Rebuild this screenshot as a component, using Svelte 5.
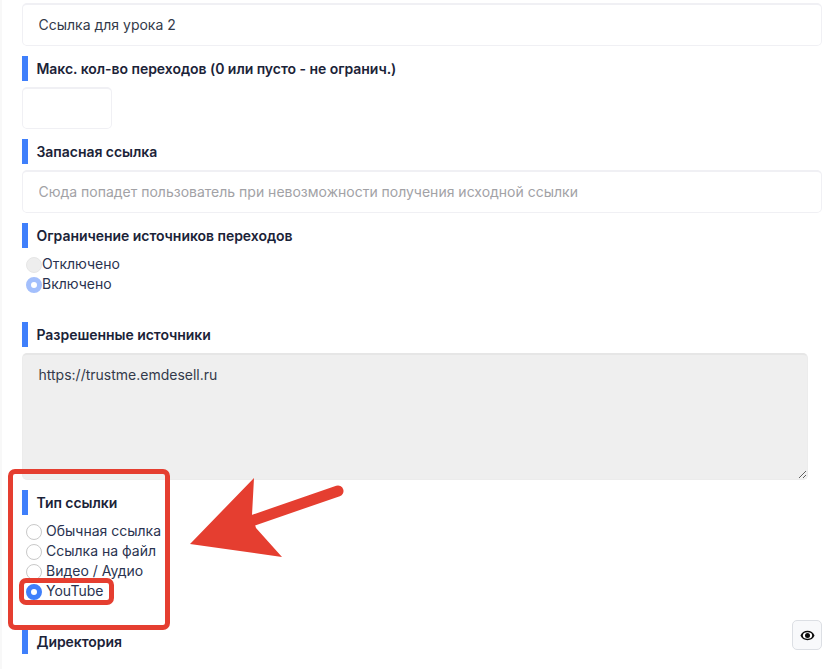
<script lang="ts">
  const linkTypes = ['Обычная ссылка', 'Ссылка на файл', 'Видео / Аудио', 'YouTube']
  let linkType = $state('YouTube')
</script>

<div class="page">
  <input class="field first" type="text" value="Ссылка для урока 2" />

  <div class="label">Макс. кол-во переходов (0 или пусто - не огранич.)</div>
  <input class="field short" type="text" />

  <div class="label">Запасная ссылка</div>
  <input
    class="field"
    type="text"
    placeholder="Сюда попадет пользователь при невозможности получения исходной ссылки"
  />

  <div class="label">Ограничение источников переходов</div>
  <div class="radios tight">
    <label class="radio"><input type="radio" name="limit" disabled /><span>Отключено</span></label>
    <label class="radio"><input type="radio" name="limit" checked disabled /><span>Включено</span></label>
  </div>

  <div class="label">Разрешенные источники</div>
  <textarea class="sources-box" readonly>https://trustme.emdesell.ru</textarea>

  <div class="label">Тип ссылки</div>
  <div class="radios">
    {#each linkTypes as type}
      <label class="radio">
        <input type="radio" name="type" value={type} bind:group={linkType} /><span>{type}</span>
      </label>
    {/each}
  </div>

  <div class="dir-row">
    <div class="label">Директория</div>
    <button class="eye" type="button" aria-label="Показать">
      <svg width="15" height="15" viewBox="0 0 24 24">
        <path d="M12 4.5C6.8 4.5 2.6 7.6.8 12c1.8 4.4 6 7.5 11.2 7.5s9.4-3.1 11.2-7.5C21.4 7.6 17.2 4.5 12 4.5z" fill="#0b0b0b" />
        <ellipse cx="12" cy="12" rx="7.4" ry="5.2" fill="#fff" />
        <circle cx="12" cy="12" r="4" fill="#0b0b0b" />
      </svg>
    </button>
  </div>

  <div class="mark mark-group"></div>
  <div class="mark mark-option"></div>
  <svg class="arrow" width="160" height="90" viewBox="185 473 160 90">
    <path d="M338 491 L254 520" stroke="#e53e30" stroke-width="11" stroke-linecap="round" />
    <path d="M190 544 L254 478 L252 515 L256 528 L282 557 Z" fill="#e53e30" />
  </svg>
</div>

<style>
  :global(body) {
    background: #fff;
  }

  .page {
    position: relative;
    box-sizing: border-box;
    height: 669px;
    overflow: hidden;
    padding: 3px 17px 0 20px;
    border-left: 2px solid #f8f8f8;
    font-family: Inter, 'Liberation Sans', sans-serif;
    font-size: 14px;
    color: #1b2338;
  }

  .field {
    display: block;
    box-sizing: border-box;
    width: 100%;
    height: 43px;
    margin-bottom: 10px;
    padding: 0 16px 2px 15.5px;
    border: 1px solid #f0f0f4;
    border-top-width: 2px;
    border-radius: 5px;
    background: #fff;
    color: #333a4a;
    font: inherit;
    outline: none;
  }

  .field::placeholder {
    color: #a2a2a6;
  }

  .short {
    width: 90px;
    height: 42px;
  }

  .label {
    height: 25px;
    margin-bottom: 6px;
    padding-left: 8.5px;
    border-left: 6px solid #3f7ffb;
    font-size: 14px;
    font-weight: 600;
    letter-spacing: -0.003em;
    line-height: 25px;
    color: #1b2338;
  }

  .sources-box {
    display: block;
    box-sizing: border-box;
    width: 786px;
    height: 127px;
    margin-bottom: 10px;
    padding: 10px 16px 10px 15.5px;
    border: 1px solid #ececec;
    border-top: 2px solid #e6e6e6;
    border-radius: 5px;
    background: #efefef;
    color: #333a4a;
    font: inherit;
    line-height: 20px;
    outline: none;
  }

  .radios {
    display: flex;
    flex-direction: column;
    margin-bottom: 28px;
    padding: 0 0 0 4px;
    line-height: 20px;
  }

  .radios.tight {
    margin-bottom: 28px;
  }

  .radio {
    display: flex;
    align-items: center;
    height: 20px;
    gap: 4px;
    color: #2a3350;
  }

  .tight .radio {
    gap: 0;
  }

  .radio input {
    appearance: none;
    box-sizing: border-box;
    flex: none;
    width: 16px;
    height: 16px;
    margin: 2px 0 0;
    border: 1px solid #c9c9c9;
    border-radius: 50%;
    background: #fff;
  }

  .radio input:checked {
    border: 5px solid #3f7ffb;
  }

  .radio input:disabled {
    border-color: #e6e6e6;
    background: #eee;
  }

  .radio input:checked:disabled {
    border-color: #a3bffc;
    background: #fff;
  }

  .dir-row {
    display: flex;
    justify-content: space-between;
    align-items: flex-start;
  }

  .eye {
    display: flex;
    align-items: center;
    justify-content: center;
    box-sizing: border-box;
    width: 30px;
    height: 30px;
    margin-top: -9px;
    padding: 0;
    border: 1px solid #dcdfe4;
    border-radius: 5px;
    background: #f8f9fb;
  }

  .mark {
    position: absolute;
    box-sizing: border-box;
    border: 5px solid #e53e30;
    border-radius: 7px;
  }

  .mark-group {
    left: 6px;
    top: 469px;
    width: 162px;
    height: 161px;
  }

  .mark-option {
    left: 17px;
    top: 578px;
    width: 95px;
    height: 27px;
  }

  .arrow {
    position: absolute;
    left: 183px;
    top: 473px;
  }
</style>
